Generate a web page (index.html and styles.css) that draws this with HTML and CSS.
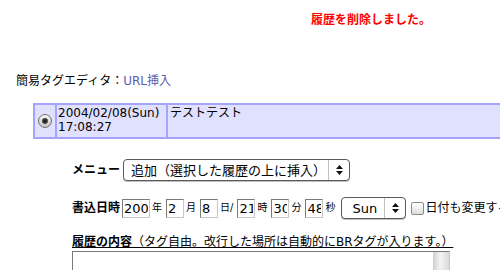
FILE: index.html
```html
<!DOCTYPE html>
<html lang="ja">
<head>
    <meta charset="UTF-8">
    <meta name="viewport" content="width=device-width, initial-scale=1.0">
    <title>履歴の編集</title>
    <link rel="stylesheet" href="styles.css">
</head>
<body>
    <div class="message">履歴を削除しました。</div>

    <div class="editor">簡易タグエディタ：<a href="#" class="link">URL挿入</a></div>

    <!-- 履歴一覧 -->
    <div class="history">
        <div class="cell cell-radio"><input type="radio" class="radio" name="rireki" checked></div>
        <div class="cell cell-date">2004/02/08(Sun)<br>17:08:27</div>
        <div class="cell cell-text">テストテスト</div>
    </div>

    <form class="form">
        <div class="row">
            <span class="label">メニュー</span>
            <div class="select select-menu">
                <select>
                    <option>追加（選択した履歴の上に挿入）</option>
                    <option>修正</option>
                    <option>削除</option>
                </select>
                <span class="arrows">
                    <svg width="7" height="10" viewBox="0 0 7 10"><path d="M3.5 0L7 4H0z M3.5 10L0 6h7z" fill="#111"/></svg>
                </span>
            </div>
        </div>

        <div class="row">
            <span class="label">書込日時</span>
            <input type="text" class="num num-year" value="2004"><span class="unit">年</span>
            <input type="text" class="num" value="2"><span class="unit">月</span>
            <input type="text" class="num" value="8"><span class="unit">日/</span>
            <input type="text" class="num" value="21"><span class="unit">時</span>
            <input type="text" class="num" value="30"><span class="unit">分</span>
            <input type="text" class="num" value="48"><span class="unit">秒</span>
            <div class="select select-day">
                <select>
                    <option>Sun</option>
                    <option>Mon</option>
                    <option>Tue</option>
                    <option>Wed</option>
                    <option>Thu</option>
                    <option>Fri</option>
                    <option>Sat</option>
                </select>
                <span class="arrows">
                    <svg width="7" height="10" viewBox="0 0 7 10"><path d="M3.5 0L7 4H0z M3.5 10L0 6h7z" fill="#111"/></svg>
                </span>
            </div>
            <input type="checkbox" class="check" id="change-date">
            <label for="change-date" class="check-text">日付も変更する</label>
        </div>

        <div class="content-label"><b>履歴の内容</b>（タグ自由。改行した場所は自動的にBRタグが入ります。）</div>
        <textarea class="content"></textarea>
    </form>
</body>
</html>
```

FILE: styles.css
```css
html, body {
    overflow: hidden;
}

body {
    margin: 0;
    padding: 12px 0 0 16px;
    font-family: "DejaVu Sans", "Noto Sans CJK JP", sans-serif;
    font-size: 12px;
    line-height: 16px;
    color: #000;
    background-color: #fff;
}

.message {
    padding-left: 295px;
    color: #ff0000;
    font-weight: bold;
}

.editor {
    margin-top: 45px;
}

.link {
    color: #5c5cac;
    text-decoration: none;
}

/* 履歴の行 */
.history {
    display: flex;
    gap: 2px;
    width: 480px;
    margin: 14px 0 0 17px;
    padding: 2px;
    background-color: #a4a4ff;
}

.cell {
    background-color: #e0e0ff;
    height: 32px;
    box-sizing: border-box;
}

.cell-radio {
    width: 20px;
    display: flex;
    align-items: center;
    justify-content: center;
}

.cell-date {
    width: 109px;
    padding: 1px 1px;
    line-height: 14px;
}

.cell-text {
    flex: 1;
    padding: 1px 2px;
    line-height: 14px;
}

.radio {
    appearance: none;
    margin: 0;
    width: 14px;
    height: 14px;
    border-radius: 50%;
    border: 1px solid #707070;
    box-sizing: border-box;
    background:
        radial-gradient(circle, #1a1a1a 0, #333 2px, #666 2.8px, rgba(0, 0, 0, 0) 3.4px),
        linear-gradient(#f4f4f4, #c4c4c4);
}

/* フォーム */
.form {
    margin: 20px 0 0 56px;
}

.row {
    display: flex;
    align-items: center;
    height: 22px;
    white-space: nowrap;
}

.row > * {
    flex-shrink: 0;
}

.row + .row {
    margin-top: 16px;
}

.label {
    font-weight: bold;
    margin-right: 2px;
}

.select {
    display: inline-flex;
    align-items: stretch;
    height: 22px;
    box-sizing: border-box;
    border: 1px solid #5a5a5a;
    border-radius: 4px;
    background-color: #fff;
    box-shadow: 0 1px 0 rgba(0, 0, 0, 0.25);
}

.select select {
    appearance: none;
    flex: 1;
    min-width: 0;
    border: none;
    background: transparent;
    margin: 0;
    font-family: "DejaVu Sans", "Noto Sans CJK JP", sans-serif;
    font-size: 13px;
    color: #000;
    outline: none;
}

.select-menu {
    width: 227px;
    margin-left: 1px;
}

.select-menu select {
    padding: 0 0 0 7px;
}

.select-day {
    width: 65px;
    margin-left: 2px;
}

.select-day select {
    padding: 0 0 0 10px;
}

.arrows {
    width: 20px;
    border-left: 1px solid #c0c0c0;
    display: flex;
    align-items: center;
    justify-content: center;
}

.num {
    width: 18px;
    height: 19px;
    box-sizing: border-box;
    margin: 0;
    padding: 0 1px;
    border: 1px solid;
    border-color: #7a7a7a #c8c8c8 #c8c8c8 #7a7a7a;
    font-family: "DejaVu Sans", sans-serif;
    font-size: 13px;
    color: #000;
}

.num-year {
    width: 28px;
}

.unit {
    font-size: 10px;
    margin: 0 4px 0 2px;
}

.check {
    appearance: none;
    width: 13px;
    height: 13px;
    margin: 0 1px 0 5px;
    border: 1px solid #8a8a8a;
    border-radius: 2px;
    box-sizing: border-box;
    background: linear-gradient(#fff, #dedede);
}

.content-label {
    margin-top: 15px;
    text-decoration: underline;
}

/* スクロールバーの溝は背景で描く */
.content {
    display: block;
    margin: 1px 0 0 0;
    width: 378px;
    height: 110px;
    box-sizing: border-box;
    border: 1px solid;
    border-color: #7a7a7a #c8c8c8 #c8c8c8 #7a7a7a;
    background: #fff linear-gradient(to right, #cfcfcf, #f4f4f4 45%, #dadada) no-repeat right top / 16px 100%;
    overflow: hidden;
    resize: none;
}
```
